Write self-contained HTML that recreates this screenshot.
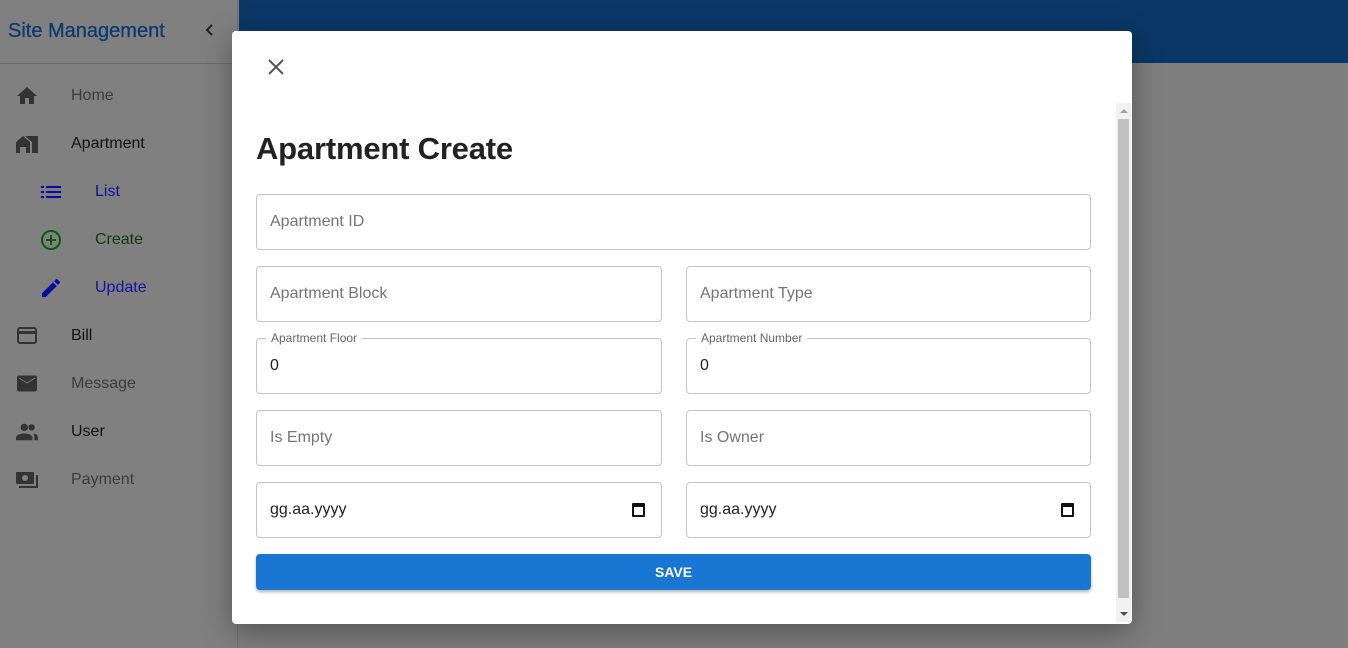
<!DOCTYPE html>
<html><head><style>
*{box-sizing:border-box;margin:0;padding:0}
body{width:1348px;height:648px;overflow:hidden;background:#7f7f7f;font-family:"Liberation Sans",Roboto,sans-serif;position:relative}
.side{position:absolute;left:0;top:0;width:238px;height:648px;background:#808080;border-right:1px solid #707070}
.title{position:absolute;left:8px;top:20px;font-size:20px;color:#0d3a6e;-webkit-text-stroke:0.3px #0d3a6e}
.chev{position:absolute;left:204px;top:23px}
.div{position:absolute;left:0;top:63px;width:238px;height:1px;background:#6e6e6e}
.item{position:absolute;font-size:16px}
.ic{position:absolute}
.top{position:absolute;left:239px;top:0;width:1109px;height:63px;background:#0a3766}
.modal{position:absolute;left:232px;top:31px;width:900px;height:593px;background:#fff;border-radius:4px;box-shadow:0 8px 30px rgba(0,0,0,.35)}
.x{position:absolute;left:34px;top:26px}
h1{position:absolute;left:24px;top:100px;font-size:31px;font-weight:bold;color:#222;letter-spacing:-0.2px}
.f{position:absolute;height:56px;border:1px solid #c4c4c4;border-radius:4px;font-size:16px;color:#757575;padding:0 13px;line-height:54px}
.f.v{color:#222}
.lbl{position:absolute;top:-8px;left:9px;background:#fff;padding:0 5px;font-size:12px;line-height:14px;color:#666}
.cal{position:absolute;right:16px;top:20px;width:13px;height:14px;border:2px solid #111;border-top-width:4px;border-radius:1px}
.btn{position:absolute;left:24px;top:523px;width:835px;height:36px;background:#1976d2;border-radius:4px;color:#fff;font-weight:bold;font-size:14px;text-align:center;line-height:36px;box-shadow:0 2px 3px rgba(0,0,0,.3)}
.sb{position:absolute;left:884px;top:72px;width:15px;height:519px;background:#f1f1f1}
.th{position:absolute;left:886px;top:88px;width:11px;height:479px;background:#c1c1c1}
.ar{position:absolute;left:888px;width:0;height:0;border-left:4px solid transparent;border-right:4px solid transparent}
</style></head><body>
<div class="side">
<div class="title">Site Management</div>
<svg class="chev" width="12" height="14" viewBox="0 0 12 14"><path d="M8 2L3 7l5 5" stroke="#222" stroke-width="2" fill="none"/></svg>
<div class="div"></div>
<svg class="ic" style="left:15px;top:84px" width="24" height="24" viewBox="0 0 24 24"><path d="M10 20v-6h4v6h5v-8h3L12 3 2 12h3v8z" fill="#333"/></svg>
<div class="item" style="left:71px;top:87px;color:#3c3c3c">Home</div>
<svg class="ic" style="left:16px;top:134px" width="22" height="20" viewBox="0 0 22 20"><path d="M0 8l7-6 7 6v11h-4v-6H4v6H0z M9 2h13v17h-6V8z" fill="#333"/></svg>
<div class="item" style="left:71px;top:135px;color:#111">Apartment</div>
<svg class="ic" style="left:41px;top:185px" width="20" height="14" viewBox="0 0 20 14"><path d="M0 1h3v2H0zM0 6h3v2H0zM0 11h3v2H0zM5 1h15v2H5zM5 6h15v2H5zM5 11h15v2H5z" fill="#0a0aa0"/></svg>
<div class="item" style="left:95px;top:183px;color:#1010a0">List</div>
<svg class="ic" style="left:40px;top:229px" width="22" height="22" viewBox="0 0 22 22"><circle cx="11" cy="11" r="9" stroke="#0a5a0a" stroke-width="2" fill="none"/><path d="M11 6v10M6 11h10" stroke="#0a5a0a" stroke-width="2"/></svg>
<div class="item" style="left:95px;top:231px;color:#0c3c0c">Create</div>
<svg class="ic" style="left:39px;top:276px" width="24" height="24" viewBox="0 0 24 24"><path d="M3 17.25V21h3.75L17.8 9.94l-3.75-3.75zM20.7 7.04a1 1 0 000-1.41l-2.34-2.34a1 1 0 00-1.41 0l-1.83 1.83 3.75 3.75z" fill="#0a0aa0"/></svg>
<div class="item" style="left:95px;top:279px;color:#1a10a0">Update</div>
<svg class="ic" style="left:17px;top:327px" width="20" height="18" viewBox="0 0 20 18"><rect x="1" y="1" width="18" height="15" rx="2" stroke="#333" stroke-width="2" fill="none"/><path d="M1 4h18v3H1z" fill="#333"/></svg>
<div class="item" style="left:71px;top:327px;color:#111">Bill</div>
<svg class="ic" style="left:17px;top:375px" width="20" height="17" viewBox="0 0 20 16"><path d="M2 0h16a2 2 0 012 2v12a2 2 0 01-2 2H2a2 2 0 01-2-2V2a2 2 0 012-2zM2 3l8 5 8-5v-1l-8 5-8-5z" fill="#333"/></svg>
<div class="item" style="left:71px;top:375px;color:#3c3c3c">Message</div>
<svg class="ic" style="left:16px;top:423px" width="22" height="18" viewBox="0 0 24 18"><circle cx="9" cy="4" r="4" fill="#333"/><circle cx="17" cy="4" r="3.5" fill="#333"/><path d="M0 18v-3c0-3 6-4.5 9-4.5s9 1.5 9 4.5v3z M19 10.5c3 .5 5 2 5 4.5v3h-4v-3c0-2-1-3.5-1-4.5z" fill="#333"/></svg>
<div class="item" style="left:71px;top:423px;color:#111">User</div>
<svg class="ic" style="left:16px;top:472px" width="22" height="17" viewBox="0 0 22 17"><rect x="0" y="0" width="18" height="12" rx="1" fill="#333"/><circle cx="9" cy="6" r="3" fill="#808080"/><path d="M20 3v11H3v2h19V3z" fill="#333"/></svg>
<div class="item" style="left:71px;top:471px;color:#3c3c3c">Payment</div>
</div>
<div class="top"></div>
<div class="modal">
<svg class="x" width="20" height="20" viewBox="0 0 20 20"><path d="M3 3l14 14M17 3L3 17" stroke="#555" stroke-width="2"/></svg>
<h1>Apartment Create</h1>
<div class="f" style="left:24px;top:163px;width:835px">Apartment ID</div>
<div class="f" style="left:24px;top:235px;width:406px">Apartment Block</div>
<div class="f" style="left:454px;top:235px;width:405px">Apartment Type</div>
<div class="f v" style="left:24px;top:307px;width:406px"><span class="lbl">Apartment Floor</span>0</div>
<div class="f v" style="left:454px;top:307px;width:405px"><span class="lbl">Apartment Number</span>0</div>
<div class="f" style="left:24px;top:379px;width:406px">Is Empty</div>
<div class="f" style="left:454px;top:379px;width:405px">Is Owner</div>
<div class="f v" style="left:24px;top:451px;width:406px">gg.aa.yyyy<span class="cal"></span></div>
<div class="f v" style="left:454px;top:451px;width:405px">gg.aa.yyyy<span class="cal"></span></div>
<div class="btn">SAVE</div>
<div class="sb"></div><div class="th"></div>
<div class="ar" style="top:78px;border-bottom:4px solid #a3a3a3"></div>
<div class="ar" style="top:581px;border-top:4px solid #505050"></div>
</div>
</body></html>
